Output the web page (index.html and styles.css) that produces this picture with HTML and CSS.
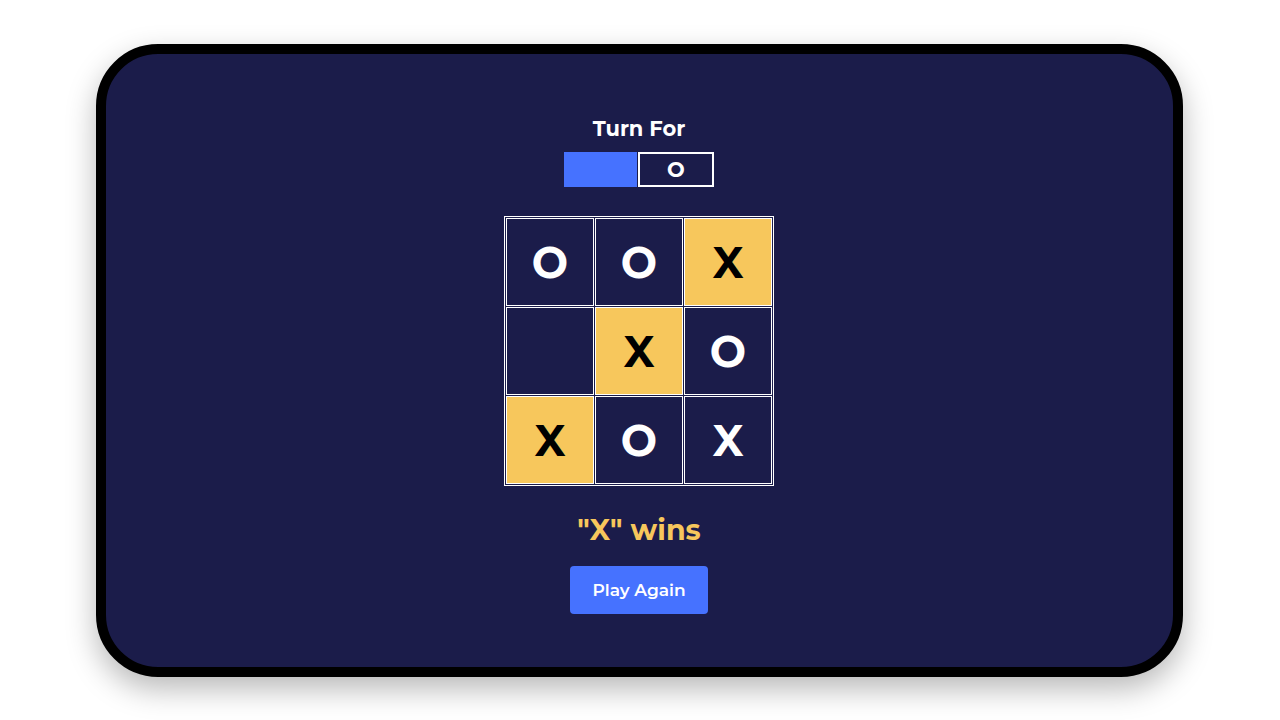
FILE: index.html
```html
<!DOCTYPE html>
<html>
<head>
<meta charset="utf-8">
<link rel="stylesheet" href="styles.css">
</head>
<body>
<div class="frame">
  <div class="game">
    <div class="turn-title">Turn For</div>
    <div class="turn">
      <div class="turn-x"></div>
      <div class="turn-o">O</div>
    </div>
    <div class="board">
      <div class="cell">O</div>
      <div class="cell">O</div>
      <div class="cell win">X</div>
      <div class="cell"></div>
      <div class="cell win">X</div>
      <div class="cell">O</div>
      <div class="cell win">X</div>
      <div class="cell">O</div>
      <div class="cell">X</div>
    </div>
    <div class="result">"X" wins</div>
    <button class="again">Play Again</button>
  </div>
</div>
</body>
</html>
```
FILE: styles.css
```css
html, body {
  margin: 0;
  padding: 0;
  background: #ffffff;
}
body {
  font-family: "Montserrat", "Noto Sans", "Open Sans", sans-serif;
  padding: 44px 0 43px 96px;
  min-height: 720px;
  box-sizing: border-box;
}
.frame {
  width: 1067px;
  height: 613px;
  border: 10px solid #000;
  border-radius: 62px;
  background: #1b1c4a;
  box-shadow: 0 12px 30px rgba(0, 0, 0, 0.28);
}
.game {
  display: flex;
  flex-direction: column;
  align-items: center;
  padding-top: 62px;
  padding-right: 1px;
}
.turn-title {
  color: #fff;
  font-weight: 700;
  font-size: 21px;
  line-height: 26px;
}
.turn {
  display: flex;
  margin-top: 10px;
  width: 150px;
  height: 35px;
}
.turn-x {
  flex: 1;
  background: #4672ff;
}
.turn-o {
  flex: 1;
  margin-left: 1px;
  border: 2px solid #fff;
  color: #fff;
  font-weight: 700;
  font-size: 21px;
  display: flex;
  align-items: center;
  justify-content: center;
}
.board {
  margin-top: 29px;
  display: grid;
  grid-template-columns: repeat(3, 88px);
  grid-template-rows: repeat(3, 88px);
  gap: 1px;
  padding: 1px;
  border: 1px solid #fff;
  background: #1b1c4a;
}
.cell {
  border: 1px solid #fff;
  background: #1b1c4a;
  color: #fff;
  font-weight: 700;
  font-size: 43px;
  display: flex;
  align-items: center;
  justify-content: center;
}
.cell.win {
  background: #f7c75c;
  color: #000;
}
.result {
  margin-top: 26px;
  color: #f7c75c;
  font-weight: 700;
  font-size: 28.5px;
  line-height: 36px;
}
.again {
  margin-top: 18px;
  width: 138px;
  height: 48px;
  border: none;
  border-radius: 4px;
  background: #4672ff;
  color: #fff;
  font-family: inherit;
  font-weight: 600;
  font-size: 17px;
}
```
